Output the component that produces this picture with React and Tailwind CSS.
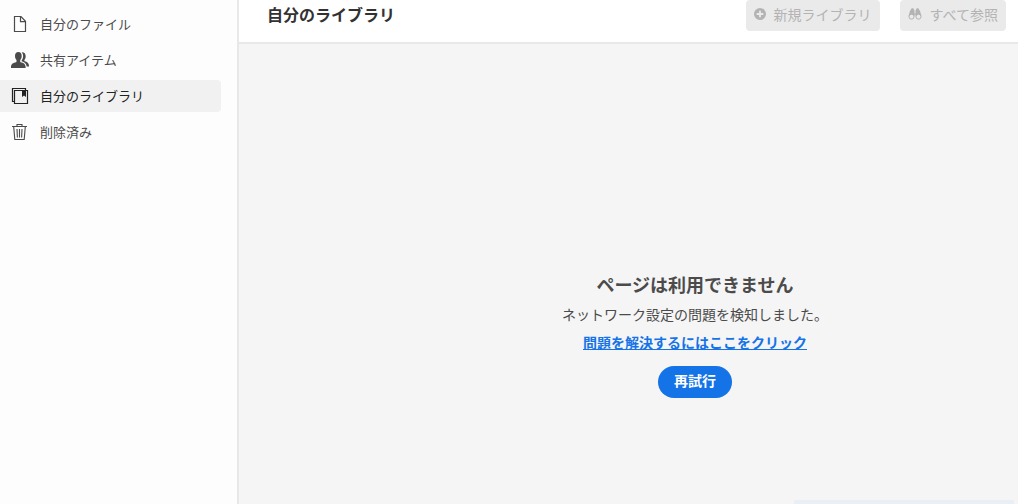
import React, { useState } from 'react';

const FileIcon = () => (
  <svg className="w-[18px] h-[18px]" viewBox="0 0 18 18" fill="none" stroke="currentColor" strokeWidth="1.2" aria-hidden="true">
    <path d="M3.500 1.500h6.500l4.500 4.800v10.200h-11z" />
    <path d="M9.500 1.700v5h4.800" />
  </svg>
);

const PeopleIcon = () => (
  <svg className="w-[18px] h-[18px]" viewBox="0 0 18 18" fill="currentColor" aria-hidden="true">
    <path d="M7.400 1C5.300 1 4 2.500 4 4.900c0 1.700.6 3.200 1.500 4.200v1.500c0 .3-.2.500-.5.600C2.400 11.700.1 12.800 0 15.700V17h14.600v-1.300c-.1-2.900-2.300-4-4.900-4.500-.3-.1-.5-.3-.5-.6V9.100c.9-1 1.500-2.500 1.500-4.200C10.700 2.500 9.500 1 7.400 1z" />
    <path d="M10.600 1.200c1 1 1.500 2.200 1.500 3.800 0 1.700-.6 3.200-1.500 4.400v.8c2.800.6 4.700 2.200 5.100 5.300H18v-.8c-.1-2.600-1.800-3.900-4.200-4.500-.3-.1-.4-.2-.4-.5v-.8c.8-.9 1.300-2.300 1.300-3.700 0-2.600-1.600-4.300-4.100-4z" />
  </svg>
);

const LibraryIcon = () => (
  <svg className="w-[18px] h-[18px]" viewBox="0 0 18 18" fill="none" stroke="currentColor" strokeWidth="1.2" aria-hidden="true">
    <path d="M3 14.500H1.500v-13h13V3" />
    <path d="M3.500 3.500h13v13h-13z" />
    <path d="M11 3.500h4V10l-2-1.600L11 10z" fill="currentColor" stroke="none" />
  </svg>
);

const TrashIcon = () => (
  <svg className="w-[18px] h-[18px]" viewBox="0 0 18 18" fill="none" stroke="currentColor" strokeWidth="1.100" aria-hidden="true">
    <path d="M1 3.500h15M6 3.300V1.500h5v1.800" />
    <path d="M2.700 3.600l1.100 12.900h9.400l1.100-12.900" />
    <path d="M6 6l.4 8.500M8.500 6v8.500M11 6l-.4 8.500" />
  </svg>
);

const PlusIcon = () => (
  <svg className="w-3 h-3" viewBox="0 0 12 12" aria-hidden="true">
    <circle cx="6" cy="6" r="6" fill="currentColor" />
    <path d="M6 2.700v6.600M2.700 6h6.600" stroke="#eaeaea" strokeWidth="1.800" />
  </svg>
);

const BinocularsIcon = () => (
  <svg className="w-[14px] h-3" viewBox="0 0 14 12" fill="none" stroke="currentColor" aria-hidden="true">
    <path d="M3.700.2h1.600l1.200 2.600v5.500H.5L2 3z" fill="currentColor" stroke="none" />
    <path d="M10.300.2H8.700L7.500 2.800v5.500h6L12 3z" fill="currentColor" stroke="none" />
    <path d="M6 6.200h2" strokeWidth="1.200" />
    <circle cx="3.500" cy="8.700" r="2.500" fill="#eaeaea" />
    <circle cx="10.500" cy="8.700" r="2.500" fill="#eaeaea" />
  </svg>
);

const NAV_ITEMS = [
  { id: 'files', label: '自分のファイル', icon: FileIcon },
  { id: 'shared', label: '共有アイテム', icon: PeopleIcon },
  { id: 'libraries', label: '自分のライブラリ', icon: LibraryIcon },
  { id: 'deleted', label: '削除済み', icon: TrashIcon },
];

const ACTIONS = [
  { id: 'new', label: '新規ライブラリ', icon: PlusIcon },
  { id: 'browse', label: 'すべて参照', icon: BinocularsIcon },
];

export default function App() {
  const [activeItem, setActiveItem] = useState('libraries');

  return (
    <div className="flex min-h-screen bg-[#fdfdfd] font-['Noto_Sans_CJK_JP',sans-serif] text-sm text-[#4b4b4b]">
      <nav className="w-[239px] shrink-0 border-r-2 border-[#e8e8e8] pt-2 pr-4">
        <ul className="flex flex-col gap-1">
          {NAV_ITEMS.map(({ id, label, icon: Icon }) => (
            <li key={id}>
              <a
                href={`#${id}`}
                onClick={() => setActiveItem(id)}
                aria-current={activeItem === id ? 'page' : undefined}
                className={`flex h-8 items-center gap-[11px] rounded-r pl-[11px] text-[13px] ${activeItem === id ? 'bg-[#f1f1f1] text-[#222222]' : 'hover:bg-[#f5f5f5]'}`}
              >
                <Icon />
                {label}
              </a>
            </li>
          ))}
        </ul>
      </nav>

      <div className="flex min-w-0 flex-1 flex-col">
        <header className="flex h-11 items-start justify-between border-b-2 border-[#e8e8e8] bg-white pr-3 pl-7">
          <h1 className="text-base leading-7 font-bold text-[#323232]">自分のライブラリ</h1>
          <div className="flex gap-5">
            {ACTIONS.map(({ id, label, icon: Icon }) => (
              <button key={id} type="button" disabled className="flex h-[31px] items-center gap-2 rounded bg-[#eaeaea] px-2 pb-1 text-[#b3b3b3]">
                <Icon />
                {label}
              </button>
            ))}
          </div>
        </header>

        <main className="flex flex-1 flex-col bg-[#f5f5f5]">
          <div className="flex flex-col items-center pt-[226px] pl-[133px]">
            <h2 className="text-lg leading-7 font-bold">ページは利用できません</h2>
            <p className="mt-1 leading-6">ネットワーク設定の問題を検知しました。</p>
            <a href="#network" className="mt-1 leading-6 font-bold text-[#1473e6] underline">問題を解決するにはここをクリック</a>
            <button type="button" className="mt-3 h-8 rounded-full bg-[#1473e6] px-4 pb-1 font-bold text-white">再試行</button>
          </div>
          <div className="mt-auto mr-1 h-1 w-[220px] self-end bg-[#e9eff4]" />
        </main>
      </div>
    </div>
  );
}
